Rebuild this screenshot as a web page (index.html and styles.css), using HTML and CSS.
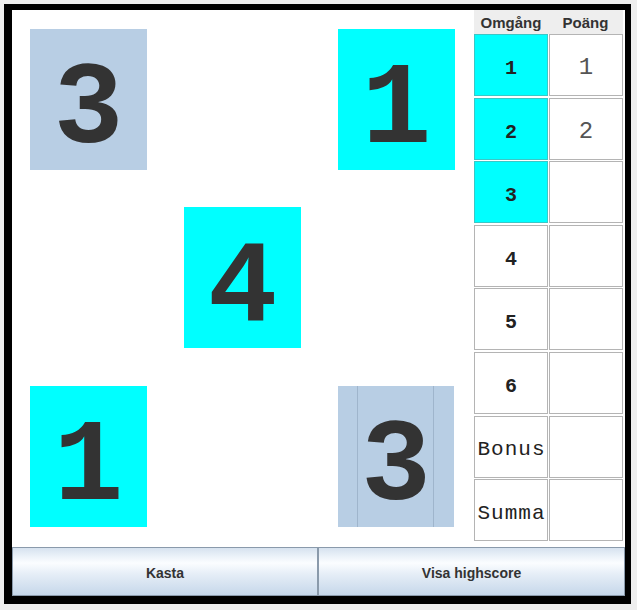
FILE: index.html
```html
<!DOCTYPE html>
<html lang="sv">
<head>
<meta charset="utf-8">
<title>Yatzy</title>
<link rel="stylesheet" href="styles.css">
</head>
<body>
<div class="window">
  <div class="main">
    <div class="board">
      <div class="cell"><div class="die die-held">3</div></div>
      <div class="cell"></div>
      <div class="cell"><div class="die die-free">1</div></div>
      <div class="cell"></div>
      <div class="cell"><div class="die die-free">4</div></div>
      <div class="cell"></div>
      <div class="cell"><div class="die die-free">1</div></div>
      <div class="cell"></div>
      <div class="cell"><div class="die die-held die-lined">3</div></div>
    </div>
    <div class="score">
      <div class="score-head">
        <div class="head-cell">Omgång</div>
        <div class="head-cell">Poäng</div>
      </div>
      <div class="score-grid">
        <div class="round round-done">1</div><div class="points">1</div>
        <div class="round round-done">2</div><div class="points">2</div>
        <div class="round round-done">3</div><div class="points"></div>
        <div class="round">4</div><div class="points"></div>
        <div class="round">5</div><div class="points"></div>
        <div class="round">6</div><div class="points"></div>
        <div class="round round-label">Bonus</div><div class="points"></div>
        <div class="round round-label">Summa</div><div class="points"></div>
      </div>
    </div>
  </div>
  <div class="buttons">
    <button class="btn">Kasta</button>
    <button class="btn">Visa highscore</button>
  </div>
</div>
</body>
</html>
```
FILE: styles.css
```css
html, body {
  margin: 0;
  padding: 0;
  background: #eeeeee;
}

.window {
  margin: 4px 0 0 4px;
  width: 613px;
  height: 586px;
  border-style: solid;
  border-color: #000;
  border-width: 6px 6px 8px 8px;
  background: #fff;
  display: flex;
  flex-direction: column;
}

.main {
  display: flex;
  height: 537px;
}

.board {
  width: 462px;
  display: grid;
  grid-template-columns: repeat(3, 154px);
  grid-template-rows: 178px 179px 180px;
}

.cell {
  display: flex;
  align-items: flex-start;
  justify-content: flex-start;
  padding: 19px 0 0 18px;
}

.die {
  width: 117px;
  height: 141px;
  display: flex;
  align-items: center;
  justify-content: center;
  font-family: "Liberation Mono", "Courier New", monospace;
  font-weight: bold;
  font-size: 116px;
  line-height: 1;
  color: #333333;
  padding-top: 22px;
  box-sizing: border-box;
}

.die-held {
  background: #b8cee4;
}

.die-free {
  background: #00ffff;
}

.die-lined {
  width: 116px;
  background:
    linear-gradient(to right,
      transparent 19px, #9fb5cc 19px, #9fb5cc 20px, transparent 20px,
      transparent 95px, #9fb5cc 95px, #9fb5cc 96px, transparent 96px),
    #b8cee4;
}

.score {
  width: 151px;
  display: flex;
  flex-direction: column;
}

.score-head {
  height: 24px;
  width: 149px;
  background: #eeeeee;
  display: grid;
  grid-template-columns: 74px 75px;
  align-items: center;
}

.head-cell {
  font-family: "Liberation Sans", Arial, sans-serif;
  font-weight: bold;
  font-size: 15px;
  color: #333;
  text-align: center;
}

.score-grid {
  width: 149px;
  display: grid;
  grid-template-columns: 74px 74px;
  column-gap: 1px;
  grid-template-rows: repeat(8, 62px);
  row-gap: 1.6px;
}

.round, .points {
  border: 1px solid #b4b4b4;
  background: #fff;
  display: flex;
  align-items: center;
  justify-content: center;
  box-sizing: border-box;
}

.round {
  font-family: "Liberation Mono", "Courier New", monospace;
  font-weight: bold;
  font-size: 20px;
  color: #222;
  padding-top: 7px;
}

.round-done {
  background: #00ffff;
  border-color: #3cc6c6;
}

.round-label {
  font-weight: normal;
  font-size: 21px;
  letter-spacing: 1px;
  padding-top: 6px;
  padding-left: 1px;
  color: #222;
}

.points {
  font-family: "Liberation Mono", "Courier New", monospace;
  font-size: 24px;
  color: #555;
  padding-top: 5px;
}

.buttons {
  display: flex;
  height: 49px;
}

.btn {
  flex: 1;
  margin: 0;
  border: 1px solid #8a9aab;
  background: linear-gradient(to bottom, #d6e2ef 0%, #eef4fa 20%, #fbfdff 32%, #e6eef7 55%, #c6d7ea 100%);
  font-family: "Liberation Sans", Arial, sans-serif;
  font-weight: bold;
  font-size: 14px;
  color: #333;
  padding: 2px 0 0 0;
}

.btn + .btn {
  border-left: 1px solid #8a9aab;
}

.btn:first-child {
  flex: 0 0 306px;
}
```
